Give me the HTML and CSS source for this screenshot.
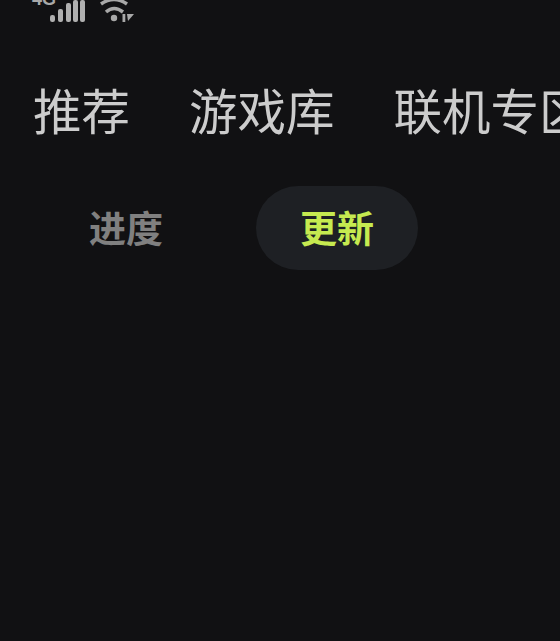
FILE: index.html
```html
<!DOCTYPE html>
<html lang="zh">
<head>
<meta charset="utf-8">
<title>更新</title>
<link rel="stylesheet" href="styles.css">
</head>
<body>
<div class="status">
  <span class="net">4G</span>
  <svg class="signal" width="36" height="22" viewBox="0 0 36 22"><rect x="0" y="15" width="5" height="7" rx="2.200"/><rect x="8" y="9" width="5" height="13" rx="2"/><rect x="16" y="3" width="5" height="19" rx="2"/><rect x="23" y="0" width="5" height="22" rx="2"/><rect x="30" y="0" width="5" height="22" rx="2"/></svg>
  <svg class="wifi" width="36" height="24" viewBox="0 0 36 24"><path class="arc" d="M1 4 Q14 -5 27 4"/><path class="arc" d="M6 12 Q14 5 23 12"/><circle cx="14" cy="18" r="3.200"/><rect x="22.500" y="14" width="2.800" height="8"/><path d="M27 14 L34 14 L28 21 Z"/></svg>
</div>
<nav class="tabs">
  <a>推荐</a>
  <a>游戏库</a>
  <a>联机专区</a>
</nav>
<div class="subtabs">
  <a class="sub">进度</a>
  <a class="sub active">更新</a>
</div>
</body>
</html>
```
FILE: styles.css
```css
html, body {
  margin: 0;
  padding: 0;
  width: 560px;
  height: 641px;
  overflow: hidden;
  background: #111113;
  font-family: "Noto Sans CJK SC", "Noto Sans", sans-serif;
}
.status {
  height: 22px;
  padding-left: 32px;
  display: flex;
  align-items: flex-end;
  overflow: hidden;
  color: #a8a8a8;
}
.net {
  font-size: 18px;
  line-height: 18px;
  font-weight: 700;
  width: 18px;
  margin-bottom: 14px;
  font-family: "Liberation Sans", sans-serif;
}
.signal { fill: #b0b0b0; flex: none; }
.wifi { fill: #a8a8a8; flex: none; margin-left: 14px; margin-bottom: -2px; }
.arc { fill: none; stroke: #a8a8a8; stroke-width: 3.500; }
.tabs {
  display: flex;
  gap: 59px;
  padding: 54px 0 0 33px;
  white-space: nowrap;
  overflow: hidden;
}
.tabs a {
  flex: none;
  font-size: 48.500px;
  line-height: 66px;
  color: #cccccc;
  font-weight: 400;
}
.subtabs {
  display: flex;
  align-items: center;
  padding: 44px 0 0 45px;
}
.sub {
  width: 162px;
  height: 82px;
  padding-bottom: 2px;
  margin-right: 49px;
  display: flex;
  align-items: center;
  justify-content: center;
  border-radius: 42px;
  font-size: 37px;
  font-weight: 700;
  color: #808080;
}
.active {
  background: #1e2024;
  color: #c6ea50;
}
```
